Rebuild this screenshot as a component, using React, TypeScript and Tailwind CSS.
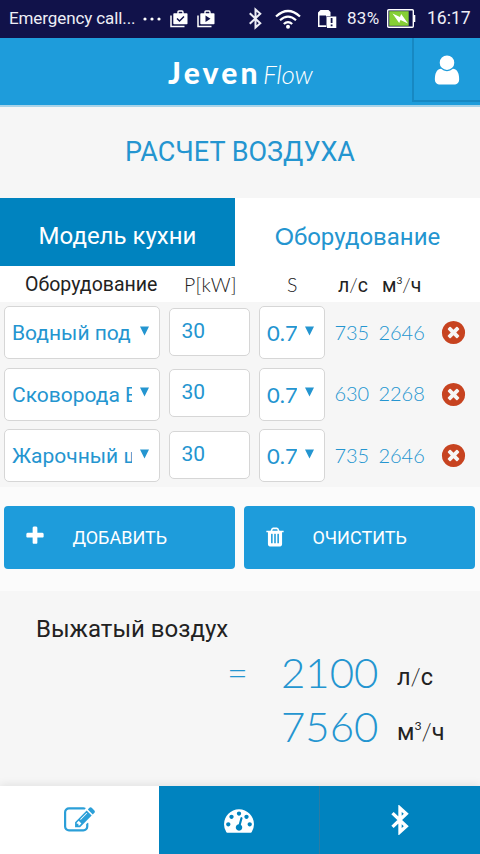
import type { ReactNode } from 'react';

interface IconProps {
  className?: string;
}

interface EquipmentRow {
  name: string;
  power: number;
  factor: string;
  litres: number;
  cubic: number;
}

const rows: EquipmentRow[] = [
  { name: 'Водный под', power: 30, factor: '0.7', litres: 735, cubic: 2646 },
  { name: 'Сковорода Е', power: 30, factor: '0.7', litres: 630, cubic: 2268 },
  { name: 'Жарочный ш', power: 30, factor: '0.7', litres: 735, cubic: 2646 },
];

const paths = {
  user: 'M1536 1399q0 109-62.5 187t-150.5 78h-854q-88 0-150.5-78t-62.5-187q0-85 8.5-160.5t31.5-152 58.5-131 94-89 134.5-34.5q131 128 313 128t313-128q76 0 134.5 34.5t94 89 58.5 131 31.5 152 8.5 160.5zm-256-887q0 159-112.5 271.5t-271.5 112.5-271.5-112.5-112.5-271.5 112.5-271.5 271.5-112.5 271.5 112.5 112.5 271.5z',
  plus: 'M1600 736v192q0 40-28 68t-68 28h-416v416q0 40-28 68t-68 28h-192q-40 0-68-28t-28-68v-416h-416q-40 0-68-28t-28-68v-192q0-40 28-68t68-28h416v-416q0-40 28-68t68-28h192q40 0 68 28t28 68v416h416q40 0 68 28t28 68z',
  trash: 'M704 1376v-704q0-14-9-23t-23-9h-64q-14 0-23 9t-9 23v704q0 14 9 23t23 9h64q14 0 23-9t9-23zm256 0v-704q0-14-9-23t-23-9h-64q-14 0-23 9t-9 23v704q0 14 9 23t23 9h64q14 0 23-9t9-23zm256 0v-704q0-14-9-23t-23-9h-64q-14 0-23 9t-9 23v704q0 14 9 23t23 9h64q14 0 23-9t9-23zm-544-992h448l-48-117q-7-9-17-11h-317q-10 2-17 11zm928 32v64q0 14-9 23t-23 9h-96v948q0 83-47 143.5t-113 60.5h-832q-66 0-113-58.5t-47-141.5v-952h-96q-14 0-23-9t-9-23v-64q0-14 9-23t23-9h309l70-167q15-37 54-63t79-26h320q40 0 79 26t54 63l70 167h309q14 0 23 9t9 23z',
  remove: 'M1277 1122q0-26-19-45l-181-181 181-181q19-19 19-45 0-27-19-46l-90-90q-19-19-46-19-26 0-45 19l-181 181-181-181q-19-19-45-19-27 0-46 19l-90 90q-19 19-19 46 0 26 19 45l181 181-181 181q-19 19-19 45 0 27 19 46l90 90q19 19 46 19 26 0 45-19l181-181 181 181q19 19 45 19 27 0 46-19l90-90q19-19 19-46zm387-226q0 209-103 385.5t-279.5 279.5-385.5 103-385.5-103-279.5-279.5-103-385.5 103-385.5 279.5-279.5 385.5-103 385.5 103 279.5 279.5 103 385.5z',
  edit: 'M888 1184l116-116-152-152-116 116v56h96v96h56zm440-720q-16-16-33 1l-350 350q-17 17-1 33t33-1l350-350q17-17 1-33zm80 594v190q0 119-84.5 203.5t-203.5 84.5h-832q-119 0-203.5-84.5t-84.5-203.5v-832q0-119 84.5-203.5t203.5-84.5h832q63 0 117 25 15 7 18 23 3 17-9 29l-49 49q-14 14-32 8-23-6-45-6h-832q-66 0-113 47t-47 113v832q0 66 47 113t113 47h832q66 0 113-47t47-113v-126q0-13 9-22l64-64q15-15 35-7t20 29zm-96-738l288 288-672 672h-288v-288zm444 132l-92 92-288-288 92-92q28-28 68-28t68 28l152 152q28 28 28 68t-28 68z',
  gauge: 'M384 1152q0-53-37.5-90.5t-90.5-37.5-90.5 37.5-37.5 90.5 37.5 90.5 90.5 37.5 90.5-37.5 37.5-90.5zm192-448q0-53-37.5-90.5t-90.5-37.5-90.5 37.5-37.5 90.5 37.5 90.5 90.5 37.5 90.5-37.5 37.5-90.5zm428 481l101-382q6-26-7.5-48.5t-38.5-29.5-48 6.5-30 39.5l-101 382q-60 5-107 43.5t-63 98.5q-20 77 20 146t117 89 146-20 89-117q16-60-6-117t-72-91zm660-33q0-53-37.5-90.5t-90.5-37.5-90.5 37.5-37.5 90.5 37.5 90.5 90.5 37.5 90.5-37.5 37.5-90.5zm-640-640q0-53-37.5-90.5t-90.5-37.5-90.5 37.5-37.5 90.5 37.5 90.5 90.5 37.5 90.5-37.5 37.5-90.5zm448 192q0-53-37.5-90.5t-90.5-37.5-90.5 37.5-37.5 90.5 37.5 90.5 90.5 37.5 90.5-37.5 37.5-90.5zm320 448q0 261-141 483-19 29-54 29h-1402q-35 0-54-29-141-221-141-483 0-182 71-348t191-286 286-191 348-71 348 71 286 191 191 286 71 348z',
};

function Icon({ name, className }: IconProps & { name: keyof typeof paths }) {
  return (
    <svg viewBox="0 0 1792 1792" fill="currentColor" className={className}>
      <path d={paths[name]} />
    </svg>
  );
}

function Bluetooth({ className, weight }: IconProps & { weight: number }) {
  return (
    <svg viewBox="0 0 16 24" fill="none" stroke="currentColor" strokeWidth={weight} className={className}>
      <path d="M2 6.5 L13 17 L8 21.5 V2.5 L13 7 L2 17.5" />
    </svg>
  );
}

function Briefcase({ children }: { children: ReactNode }) {
  return (
    <svg viewBox="0 0 18 18" className="h-[18px] w-[18px]">
      <path d="M1 5.5V16.5H14.5" fill="none" stroke="#fff" strokeWidth="1.5" />
      <path d="M8 4V2.2Q8 1 9 1H12Q13 1 13 2.2V4" fill="none" stroke="#fff" strokeWidth="1.4" />
      <rect x="3.3" y="3.2" width="14.2" height="11" rx="0.8" fill="#fff" />
      {children}
    </svg>
  );
}

function StatusBar() {
  return (
    <div className="flex h-[38px] items-center bg-[#11124a] pb-px pl-[9px] text-[17.5px] text-[#eeeef6]">
      <span className="w-[134px] whitespace-nowrap text-[17px] tracking-[-0.1px]">Emergency call...</span>
      <svg viewBox="0 0 18 4" className="h-1 w-[18px] shrink-0" fill="#fff">
        <circle cx="2" cy="2" r="1.6" />
        <circle cx="9" cy="2" r="1.6" />
        <circle cx="16" cy="2" r="1.6" />
      </svg>
      <div className="ml-[9px] flex gap-[9px]">
        <Briefcase>
          <path d="M7 8.5L9.5 11L14 6.5" fill="none" stroke="#11124a" strokeWidth="1.5" />
        </Briefcase>
        <Briefcase>
          <path d="M8.5 5.5V12L13.5 8.7Z" fill="#11124a" />
        </Briefcase>
      </div>
      <Bluetooth className="ml-[32px] h-[23px] w-[17px]" weight={2.1} />
      <svg viewBox="0 0 26 20" className="ml-[11px] h-5 w-[26px]" fill="none" stroke="#fff" strokeWidth="2.2">
        <path d="M1 7.5Q13 -3.5 25 7.5" />
        <path d="M5 11.3Q13 4 21 11.3" />
        <path d="M8.8 15Q13 11.2 17.2 15" />
        <circle cx="13" cy="17.7" r="2" fill="#fff" stroke="none" />
      </svg>
      <svg viewBox="0 0 20 20" className="ml-4 h-5 w-5">
        <path d="M1 3.5L3.5 1H11.5L13.5 3V7H9.5V18H1Z" fill="#fff" />
        <path d="M2.5 6.5H9V16.3H2.5Z" fill="#11124a" />
        <rect x="10" y="7.5" width="9.3" height="11.5" fill="#fff" />
        <path d="M14.6 9V14M14.6 15.5V17.3" stroke="#11124a" strokeWidth="1.8" />
      </svg>
      <span className="ml-2.5 w-10 text-[17px] tracking-[0.3px]">83%</span>
      <svg viewBox="0 0 29 19" className="h-[19px] w-[29px]">
        <rect x="0.7" y="0.7" width="25.6" height="17.6" rx="1" fill="none" stroke="#fff" strokeWidth="1.4" />
        <path d="M27.6 6V13" stroke="#fff" strokeWidth="1.4" />
        <rect x="2.2" y="2.2" width="19.5" height="14.6" fill="#86cf36" />
        <path d="M5.5 4.5L13 8L14.2 5L21 14.5L13.5 11L12.2 14Z" fill="#fff" />
      </svg>
      <span className="ml-[11px] text-[17.5px]">16:17</span>
    </div>
  );
}

function Header() {
  return (
    <header className="flex h-[69px] border-b-2 border-[#a9d3e8] bg-[#1e9cdb] text-white">
      <div className="flex w-[412px] items-baseline pt-[13px] pl-[168px] font-['Lato',sans-serif]">
        <span className="w-[95px] text-[30px] leading-[42px] font-black tracking-[3.2px]">Jeven</span>
        <span className="text-[26px] leading-[42px] font-light tracking-[-0.2px] italic">Flow</span>
      </div>
      <button className="flex h-[64px] w-[68px] justify-center border-b-2 border-l-2 border-[#1788c2] pt-[15px]">
        <Icon name="user" className="h-[34px] w-[34px]" />
      </button>
    </header>
  );
}

function Select({ value, className, textClass }: { value: string; className: string; textClass: string }) {
  return (
    <div className={`flex h-[53px] shrink-0 items-center rounded-[5px] border border-[#d6d6d6] bg-white ${className}`}>
      <span className={`overflow-hidden whitespace-nowrap ${textClass}`}>{value}</span>
      <svg viewBox="0 0 10 10" className="mb-1 h-[10px] w-[9px] shrink-0" fill="currentColor">
        <path d="M0 0H10L5 10Z" />
      </svg>
    </div>
  );
}

function Equipment({ row }: { row: EquipmentRow }) {
  return (
    <div className="flex h-[61.5px] items-start pt-[4.4px] pl-[4.4px] text-[#2495d0]">
      <Select value={row.name} className="w-[156px] pl-[6.6px]" textClass="mt-[2px] mr-[8.4px] w-[120px] text-[21px]" />
      <div className="mt-[1.5px] ml-[9px] h-[48px] w-[81px] rounded-[5px] border border-[#d6d6d6] bg-white pl-[11px] text-[21px] leading-[45px]">
        {row.power}
      </div>
      <Select
        value={row.factor}
        className="ml-[9px] w-[66px] pl-[6.6px]"
        textClass="mr-[8.4px] w-[30px] font-['Lato',sans-serif] text-[22px]"
      />
      <div className="flex h-[53px] items-center font-['Lato',sans-serif] text-[20px] font-light">
        <span className="mb-[2px] ml-[9px] w-[44px]">{row.litres}</span>
        <span className="mb-[2px] w-[62px]">{row.cubic}</span>
        <Icon name="remove" className="h-[27px] w-[27px] text-[#c74320]" />
      </div>
    </div>
  );
}

function Slash() {
  return <span className="font-['Lato',sans-serif] font-light">/</span>;
}

function CubicUnit() {
  return (
    <>
      м<sup className="-top-[0.75em] font-['Lato',sans-serif] text-[0.52em] font-normal">3</sup>
      <Slash />ч
    </>
  );
}

export default function App() {
  return (
    <div className="flex h-[854px] w-[480px] flex-col overflow-hidden bg-[#fbfbfb] font-['Roboto',sans-serif] text-[#222]">
      <StatusBar />
      <Header />

      <h1 className="h-[91px] bg-[#f6f6f6] text-center text-[27px] leading-[90px] text-[#2495d0]">РАСЧЕТ ВОЗДУХА</h1>

      <div className="flex h-[68px] text-[24px] leading-[76px]">
        <div className="w-[235px] bg-[#0083bf] text-center text-white">Модель кухни</div>
        <div className="flex-1 bg-white text-center leading-[75px] text-[#2495d0]">
          <span className="font-['Lato',sans-serif]">О</span>борудование
        </div>
      </div>

      <div className="flex h-9 bg-white pl-[25px] text-[19.5px] leading-[38px] whitespace-nowrap">
        <span className="w-[159px]">Оборудование</span>
        <span className="w-[103px] font-['Lato',sans-serif] font-light tracking-[0.2px]">P[kW]</span>
        <span className="w-[51px] font-['Lato',sans-serif] font-light">S</span>
        <span className="w-[44px]">
          л<Slash />с
        </span>
        <span>
          <CubicUnit />
        </span>
      </div>

      <div className="h-[185px] bg-[#f6f6f6]">
        {rows.map((row, index) => (
          <Equipment key={index} row={row} />
        ))}
      </div>

      <div className="flex h-[104px] gap-[9px] pt-[19px] pl-[4.4px] text-[18px] text-white">
        <button className="flex h-[63px] w-[231px] items-center rounded-[4px] bg-[#1e9cdb] pl-[19.5px]">
          <Icon name="plus" className="mb-1 h-[22px] w-[22px]" />
          <span className="ml-[26.5px]">ДОБАВИТЬ</span>
        </button>
        <button className="flex h-[63px] w-[231px] items-center rounded-[4px] bg-[#1e9cdb] pl-[19.5px]">
          <Icon name="trash" className="mb-0.5 h-[22px] w-[22px]" />
          <span className="ml-[26.5px]">ОЧИСТИТЬ</span>
        </button>
      </div>

      <div className="h-[195px] bg-[#f6f6f6] pt-[22px]">
        <p className="pl-[36px] text-[24px] leading-8">Выжатый воздух</p>
        <div className="flex h-[54px] items-center">
          <span className="w-[281px] pl-[227px] font-['Lato',sans-serif] text-[36px] font-light text-[#2495d0]">=</span>
          <span className="w-[116px] font-['Lato',sans-serif] text-[42px] leading-[54px] font-light text-[#2495d0]">2100</span>
          <span className="mt-[9px] text-[23.5px] leading-8">
            л<Slash />с
          </span>
        </div>
        <div className="flex h-[54px] items-center pl-[281px]">
          <span className="w-[116px] font-['Lato',sans-serif] text-[42px] leading-[54px] font-light text-[#2495d0]">7560</span>
          <span className="mt-[10px] text-[23.5px] leading-8">
            <CubicUnit />
          </span>
        </div>
      </div>

      <nav className="flex h-[68px] bg-[#0083bf] text-white shadow-[0_-2px_8px_rgba(0,0,0,0.08)]">
        <button className="flex w-[159px] items-center justify-center bg-white text-[#2b9fd8]">
          <Icon name="edit" className="h-[31px] w-[31px]" />
        </button>
        <button className="flex w-[161px] items-center justify-center border-r border-[#2b7ba3]">
          <Icon name="gauge" className="h-[30px] w-[30px]" />
        </button>
        <button className="flex flex-1 items-center justify-center">
          <Bluetooth className="h-[30px] w-5" weight={2.7} />
        </button>
      </nav>
    </div>
  );
}
